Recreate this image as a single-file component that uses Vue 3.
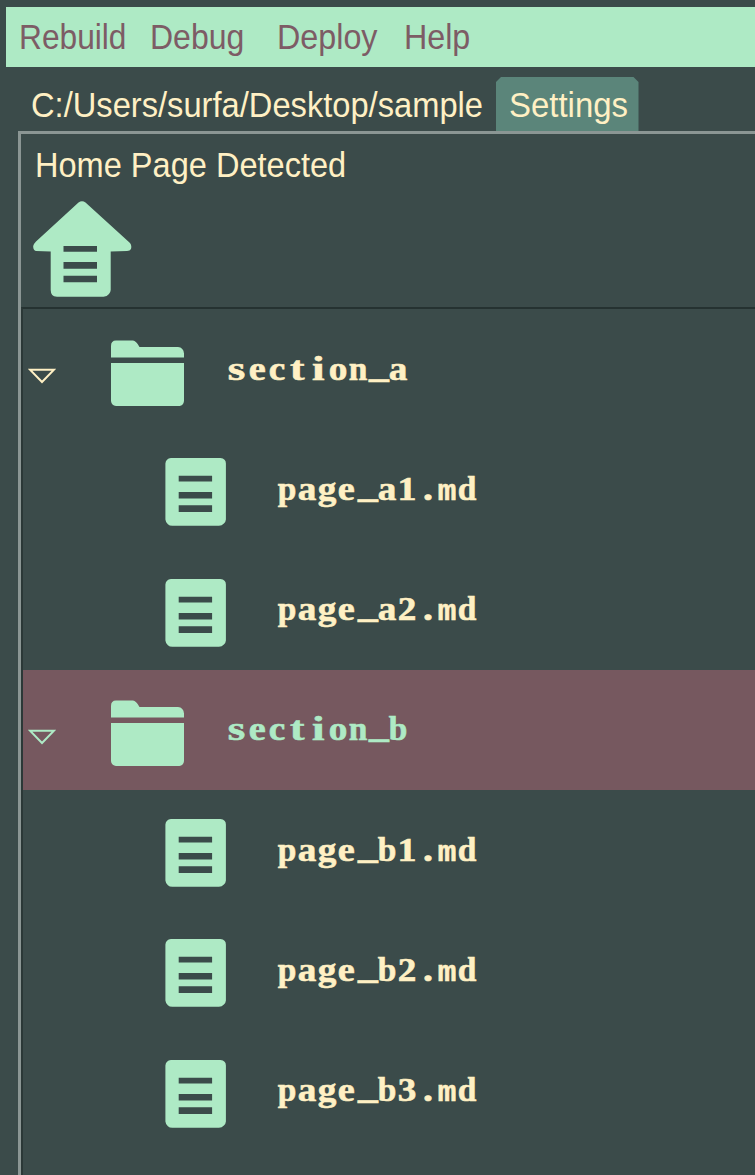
<script setup>
import { h } from 'vue'

const menus = [
  { label: 'Rebuild', width: 107.5, gap: 24 },
  { label: 'Debug', width: 94.3, gap: 33 },
  { label: 'Deploy', width: 100.5, gap: 25.8 },
  { label: 'Help', width: 66.3, gap: 0 },
]

const rows = [
  { name: 'section_a', folder: true },
  { name: 'page_a1.md' },
  { name: 'page_a2.md' },
  { name: 'section_b', folder: true, selected: true },
  { name: 'page_b1.md' },
  { name: 'page_b2.md' },
  { name: 'page_b3.md' },
]

// Condensed interface label with a fixed advance width.
const Label = (props) =>
  h('svg', { width: props.w, height: 44, style: { overflow: 'visible', flex: 'none', display: 'block' } }, [
    h('text', { x: 0, y: 33, textLength: props.w, lengthAdjust: 'spacingAndGlyphs' }, props.text),
  ])
Label.props = ['text', 'w']

// Each glyph of a tree name fills a 20px cell: [offset, width].
const cell = { '_': [0, 19.8], i: [3, 12.5], '.': [5, 10], t: [1, 14.5], '1': [-0.5, 19], s: [-1.3, 17.5], c: [-0.3, 16.5], e: [-0.3, 17], m: [-0.3, 18.6] }
const glyph = (c) => cell[c] || [-0.3, 18.6]
</script>

<template>
  <div class="window">
    <nav class="menubar">
      <span v-for="m in menus" :key="m.label" :style="{ marginRight: m.gap + 'px' }">
        <Label :text="m.label" :w="m.width" />
      </span>
    </nav>
    <div class="tabs">
      <div class="tab path"><Label text="C:/Users/surfa/Desktop/sample" :w="452" /></div>
      <div class="tab active">
        <svg class="tab-shape" width="142.5" height="55" viewBox="0 0 142.5 55"><path d="M0 55V5L5 0H137.5L142.5 5V55Z" /></svg>
        <Label text="Settings" :w="119" />
      </div>
    </div>
    <main class="pane">
      <header class="home">
        <Label text="Home Page Detected" :w="311.2" />
        <svg class="home-icon" width="99" height="97" viewBox="0 0 99 97">
          <path d="M45.5 1.5Q49 -1 52.5 1.5L97 42Q99 44.5 98 48Q97 50 94 50L77.7 50.5V89Q77.5 91.5 76 93Q74 95.7 70.5 95.7H24Q20.5 95.7 19.2 94Q17.7 92 17.7 89V50.5L3 50Q0 49.5 0.2 45Q1 42.5 3 40.5Z" />
          <path class="cut" d="M30.5 45H64V50.7H30.5ZM30.5 61H64V67.7H30.5ZM30.5 74.7H64V81.3H30.5Z" />
        </svg>
      </header>
      <section class="tree">
        <div v-for="r in rows" :key="r.name" class="row" :class="{ selected: r.selected, child: !r.folder }">
          <svg v-if="r.folder" class="arrow" width="28" height="17" viewBox="0 0 28 17">
            <path d="M2 1.7H26L14 14Z" />
          </svg>
          <svg v-if="r.folder" class="folder" width="73" height="67" viewBox="0 0 73 67">
            <path d="M0 17.5V6Q0 0.5 5 0.5H22Q25 0.5 28.5 7H67Q72.5 7.5 73 13.5V17.5ZM0 23H73V61Q72.5 65.5 68.5 66H5Q0.5 65.5 0 61Z" />
          </svg>
          <svg v-else class="file" width="61" height="68" viewBox="0 0 61 68">
            <g transform="translate(0.4 0)">
              <path d="M5.5 0H55Q60.5 0.5 60.5 5.5V61.5Q60.3 64 58.5 65.5Q56.5 67.8 53.5 67.8H7Q4 67.8 2.5 66.3Q0.3 64.5 0 61.5V5.5Q0.5 0.5 5.5 0Z" />
              <path class="cut" d="M13.3 17.7H46.7V23.5H13.3ZM13.3 34H46.7V40.5H13.3ZM13.3 47.3H46.7V54H13.3Z" />
            </g>
          </svg>
          <svg class="name" :width="r.name.length * 20" height="40">
            <text><tspan v-for="(c, i) in r.name" :key="i" :class="{ wide: c === 'm' }" :x="i * 20 + glyph(c)[0]" :y="c === '_' ? 27.3 : 30" :textLength="glyph(c)[1]" lengthAdjust="spacingAndGlyphs">{{ c }}</tspan></text>
          </svg>
        </div>
      </section>
    </main>
  </div>
</template>

<style>
body {
  margin: 0;
  background: #3b4b4a;
}
</style>

<style scoped>
.window {
  box-sizing: border-box;
  width: 755px;
  height: 1175px;
  padding-top: 6.5px;
  overflow: hidden;
  display: flex;
  flex-direction: column;
  background: #3b4b4a;
  color: #fff0c4;
  fill: currentColor;
  font-family: "Liberation Sans", Arial, sans-serif;
  font-size: 34.7px;
}
.menubar {
  flex: none;
  height: 60px;
  margin-left: 6px;
  padding: 9.7px 0 0 12.6px;
  box-sizing: border-box;
  display: flex;
  color: #7d5c65;
  background: #aeeac5;
}
.tabs {
  flex: none;
  height: 64.5px;
  padding: 10.5px 0 0 30.5px;
  box-sizing: border-box;
  display: flex;
}
.tab {
  padding-top: 7px;
  box-sizing: border-box;
}
.path {
  width: 465.5px;
}
.active {
  position: relative;
  width: 142.5px;
  height: 54px;
  padding-left: 12.5px;
}
.active > :last-child {
  position: relative;
}
.tab-shape {
  position: absolute;
  left: 0;
  top: 0;
  color: #5b857a;
}
.pane {
  position: relative;
  flex: 1;
  margin-left: 18px;
  border-left: 3px solid #8b9694;
  border-top: 3px solid #8b9694;
}
.home {
  height: 173px;
  padding: 9.5px 0 0 14.4px;
  box-sizing: border-box;
}
.home-icon {
  display: block;
  margin: 13.5px 0 0 -2.6px;
  color: #aeeac5;
}
.tree {
  height: 868px;
  border-top: 2px solid #253231;
  border-left: 2px solid #2b3837;
}
.row {
  display: flex;
  align-items: flex-start;
  height: 120.25px;
  padding-left: 5px;
  box-sizing: border-box;
}
.row.child {
  padding-left: 142px;
}
.selected {
  background: #76585f;
  color: #aeeac5;
}
.arrow {
  margin-top: 59.3px;
}
.arrow path {
  fill: none;
  stroke: currentColor;
  stroke-width: 2;
}
.folder {
  margin: 30.5px 44.5px 0 55px;
  color: #aeeac5;
}
.file {
  margin: 29px 51.8px 0 0;
  color: #aeeac5;
}
.cut {
  fill: #3b4b4a;
}
.name {
  margin-top: 40.7px;
  overflow: visible;
  font-family: "Liberation Serif", "Times New Roman", serif;
  font-size: 33px;
  font-weight: bold;
  stroke: currentColor;
  stroke-width: 0.6px;
}
.wide {
  font-family: "Liberation Mono", "Courier New", monospace;
  font-size: 30px;
}
</style>
